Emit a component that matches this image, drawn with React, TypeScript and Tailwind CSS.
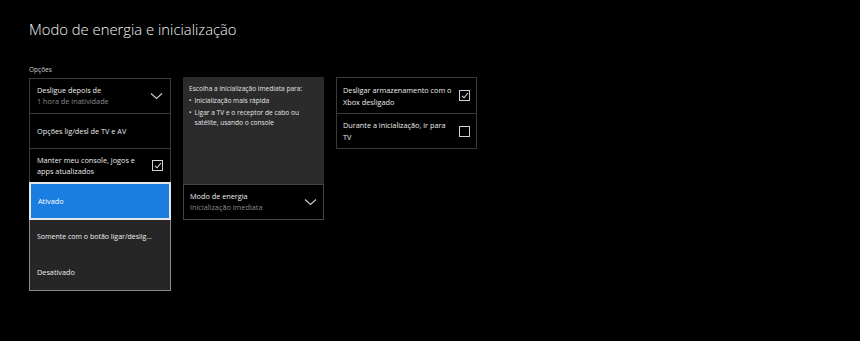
import { useState } from 'react';

const font = { fontFamily: '"Open Sans", "Noto Sans", sans-serif' };

const Chevron = () => (
  <svg width="13" height="8" viewBox="0 0 13 8" fill="none" className="shrink-0">
    <path d="M1 1.5 L6.5 6.5 L12 1.5" stroke="#c8c8c8" strokeWidth="1.2" />
  </svg>
);

const Check = ({ checked }: { checked: boolean }) => (
  <span className="w-[11px] h-[11px] border border-[#d0d0d0] flex items-center justify-center shrink-0">
    {checked && (
      <svg width="8" height="7" viewBox="0 0 8 7" fill="none">
        <path d="M1 3.8 L3 5.8 L7 1" stroke="#e0e0e0" strokeWidth="1.1" />
      </svg>
    )}
  </span>
);

const App = () => {
  const [mode] = useState('Ativado');

  return (
    <div className="w-[860px] h-[341px] bg-black text-white overflow-hidden pl-[29px] pt-[17px] whitespace-nowrap" style={font}>
      <h1 className="text-[14.8px] font-light leading-[24px] text-[#f4f4f4]">
        Modo de energia e inicialização
      </h1>

      <div className="text-[6.5px] text-[#cfcfcf] mt-[24px] leading-[9px]">Opções</div>

      <div className="flex gap-[12px] mt-[4px] items-start text-[7.3px]">
        {/* Opções */}
        <div className="w-[142px]">
          <div className="border border-[#3a3a3a] border-b-0">
            <div className="h-[35px] px-[7px] flex items-center justify-between border-b border-[#3a3a3a]">
              <div className="leading-[11px]">
                <div className="text-[#ececec]">Desligue depois de</div>
                <div className="text-[#8a8a8a]">1 hora de inatividade</div>
              </div>
              <Chevron />
            </div>
            <div className="h-[35px] px-[7px] flex items-center border-b border-[#3a3a3a]">
              <span className="text-[#ececec]">Opções lig/desl de TV e AV</span>
            </div>
            <div className="h-[33px] px-[7px] flex items-center justify-between">
              <div className="leading-[11px] text-[#ececec]">
                Manter meu console, jogos e
                <br />
                apps atualizados
              </div>
              <Check checked />
            </div>
          </div>

          {/* menu aberto */}
          <div className="bg-[#262626] border border-[#8a8a8a] h-[109px] flex flex-col">
            <div className="h-[38px] bg-[#1a7de0] border-2 border-[#e6e6e6] -m-px px-[7px] flex items-center">
              <span className="text-white">{mode}</span>
            </div>
            <div className="h-[36px] px-[7px] flex items-center">
              <span className="text-[#ececec] text-[7px]">Somente com o botão ligar/deslig...</span>
            </div>
            <div className="h-[35px] px-[7px] flex items-center">
              <span className="text-[#ececec]">Desativado</span>
            </div>
          </div>
        </div>

        {/* descrição */}
        <div className="w-[141px] -mt-px">
          <div className="h-[107px] bg-[#2b2b2b] px-[6px] pt-[7px] text-[6.6px] leading-[10px] text-[#e4e4e4]">
            <div>Escolha a inicialização imediata para:</div>
            <div className="mt-[2px] flex gap-[3px]">
              <span>•</span>
              <span>Inicialização mais rápida</span>
            </div>
            <div className="mt-[2px] flex gap-[3px]">
              <span>•</span>
              <span>
                Ligar a TV e o receptor de cabo ou
                <br />
                satélite, usando o console
              </span>
            </div>
          </div>
          <div className="h-[36px] border border-[#444] px-[6px] flex items-center justify-between">
            <div className="leading-[11px]">
              <div className="text-[#ececec]">Modo de energia</div>
              <div className="text-[#8a8a8a]">Inicialização imediata</div>
            </div>
            <Chevron />
          </div>
        </div>

        {/* armazenamento */}
        <div className="w-[141px] -mt-px border border-[#3a3a3a]">
          <div className="h-[36px] px-[6px] flex items-center justify-between border-b border-[#3a3a3a]">
            <div className="leading-[12px] text-[#ececec]">
              Desligar armazenamento com o
              <br />
              Xbox desligado
            </div>
            <Check checked />
          </div>
          <div className="h-[34px] px-[6px] flex items-center justify-between">
            <div className="leading-[12px] text-[#ececec]">
              Durante a inicialização, ir para
              <br />
              TV
            </div>
            <Check checked={false} />
          </div>
        </div>
      </div>
    </div>
  );
};

export default App;
